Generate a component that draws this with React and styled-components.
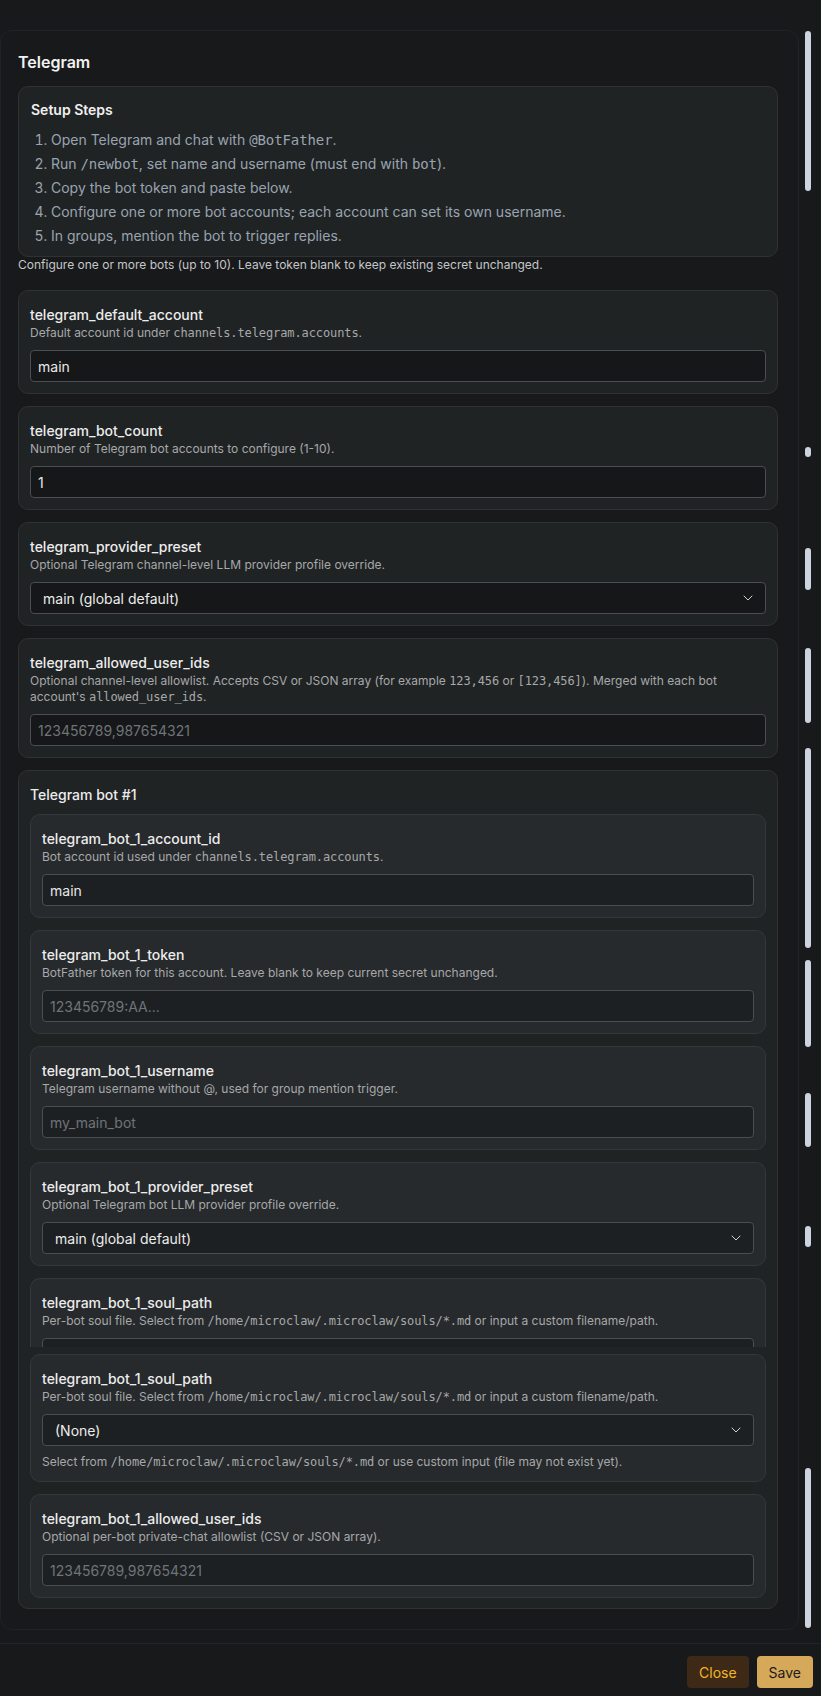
import React from 'react';
import styled, { createGlobalStyle } from 'styled-components';
import { ChevronDown } from 'lucide-react';

const Global = createGlobalStyle`
  html, body { margin: 0; padding: 0; background: #18191b; }
  body { font-family: Inter, "Noto Sans", sans-serif; color: #e6e6e6; -webkit-font-smoothing: antialiased; }
  * { box-sizing: border-box; }
`;

const Page = styled.div`
  width: 821px;
  height: 1696px;
  display: flex;
  flex-direction: column;
  background: #18191b;
  overflow: hidden;
`;

const Body = styled.div`
  display: flex;
  flex: 1;
  min-height: 0;
`;

const Panel = styled.section`
  width: 799px;
  margin-top: 30px;
  align-self: flex-start;
  border: 1px solid #1e2329;
  border-radius: 12px;
  padding: 19px 20px 20px 17px;
  background: #18191b;
`;

const Heading = styled.h2`
  margin: 0 0 12px;
  font-size: 16px;
  line-height: 24px;
  font-weight: 600;
  color: #f2f2f2;
`;

const StepsCard = styled.div`
  background: #202324;
  border: 1px solid #2e3235;
  border-radius: 10px;
  padding: 13px 12px 8px;
`;

const StepsTitle = styled.div`
  font-size: 14px;
  line-height: 20px;
  font-weight: 600;
  color: #f0f0f0;
  margin-bottom: 8px;
`;

const Steps = styled.ol`
  margin: 0;
  padding-left: 20px;
  color: #9aa3b0;
  font-size: 14px;
  line-height: 24px;
`;

const Code = styled.code`
  font-family: "DejaVu Sans Mono", "Liberation Mono", monospace;
  font-size: 1em;
  line-height: 1;
  letter-spacing: -0.1px;
`;

const Caption = styled.p`
  margin: 0 0 17px;
  font-size: 12px;
  line-height: 16px;
  color: #c4c6c8;
`;

const Stack = styled.div`
  display: flex;
  flex-direction: column;
  gap: 12px;
`;

const Card = styled.div`
  background: ${p => (p.$inner ? '#272a2c' : '#202324')};
  border: 1px solid ${p => (p.$inner ? '#34383b' : '#2e3235')};
  border-radius: 10px;
  padding: 14px 11px 11px;
  ${p => p.$clipped && `
    height: 69px;
    overflow: hidden;
    border-bottom: none;
    border-radius: 10px 10px 0 0;
    margin-bottom: -5px;
  `}
`;

const Group = styled.div`
  background: #202324;
  border: 1px solid #2e3235;
  border-radius: 10px;
  padding: 14px 11px 10px;
`;

const GroupTitle = styled.div`
  font-size: 14px;
  line-height: 20px;
  font-weight: 500;
  color: #ececec;
  margin-bottom: 9px;
`;

const Label = styled.div`
  font-size: 14px;
  line-height: 20px;
  font-weight: 500;
  color: #ececec;
`;

const Desc = styled.div`
  font-size: 12px;
  line-height: 16px;
  color: #a6a8aa;
  margin-bottom: 9px;
`;

const Hint = styled.div`
  font-size: 12px;
  line-height: 16px;
  color: #a6a8aa;
  margin-top: 8px;
`;

const Input = styled.input`
  display: block;
  width: 100%;
  height: 32px;
  padding: 0 7px;
  border: 1px solid #4a4e53;
  border-radius: 4px;
  background: ${p => (p.$inner ? '#1d2022' : '#151718')};
  color: #e8e8e8;
  font-family: Inter, "Noto Sans", sans-serif;
  font-size: 14px;
  outline: none;
  &::placeholder { color: #6f7479; }
`;

const SelectBox = styled.div`
  display: flex;
  align-items: center;
  justify-content: space-between;
  height: 32px;
  padding: 0 9px 0 12px;
  border: 1px solid #4a4e53;
  border-radius: 4px;
  background: ${p => (p.$inner ? '#1d2022' : '#151718')};
  color: #ececec;
  font-size: 14px;
  svg { color: #d0d0d0; }
`;

const Rail = styled.div`
  position: relative;
  flex: 1;
`;

const Thumb = styled.div`
  position: absolute;
  left: 6px;
  width: 6px;
  border-radius: 3px;
  background: #cdd4df;
`;

const Footer = styled.footer`
  display: flex;
  justify-content: flex-end;
  gap: 8px;
  padding: 12px 8px 8px;
  border-top: 1px solid #1f242b;
`;

const Button = styled.button`
  height: 32px;
  padding: 0 12px;
  border: none;
  border-radius: 4px;
  font-family: Inter, "Noto Sans", sans-serif;
  font-size: 14px;
  background: ${p => (p.$primary ? '#d6a95a' : '#3d2916')};
  color: ${p => (p.$primary ? '#1b1b1b' : '#f2b625')};
`;

const thumbs = [
  [31, 160], [447, 10], [548, 42], [648, 75], [748, 200],
  [960, 87], [1093, 54], [1226, 21], [1468, 160],
];

function Field({ label, desc, value, placeholder, select, hint, inner, clipped }) {
  return (
    <Card $inner={inner} $clipped={clipped}>
      <Label>{label}</Label>
      <Desc>{desc}</Desc>
      {select ? (
        <SelectBox $inner={inner}>
          <span>{value}</span>
          <ChevronDown size={16} strokeWidth={1.5} />
        </SelectBox>
      ) : (
        <Input $inner={inner} readOnly value={value || ''} placeholder={placeholder} />
      )}
      {hint && <Hint>{hint}</Hint>}
    </Card>
  );
}

const soulDesc = (
  <>Per-bot soul file. Select from <Code>/home/microclaw/.microclaw/souls/*.md</Code> or input a custom filename/path.</>
);

export default function App() {
  return (
    <>
      <Global />
      <Page>
        <Body>
          <Panel>
            <Heading>Telegram</Heading>
            <StepsCard>
              <StepsTitle>Setup Steps</StepsTitle>
              <Steps>
                <li>Open Telegram and chat with <Code>@BotFather</Code>.</li>
                <li>Run <Code>/newbot</Code>, set name and username (must end with <Code>bot</Code>).</li>
                <li>Copy the bot token and paste below.</li>
                <li>Configure one or more bot accounts; each account can set its own username.</li>
                <li>In groups, mention the bot to trigger replies.</li>
              </Steps>
            </StepsCard>
            <Caption>Configure one or more bots (up to 10). Leave token blank to keep existing secret unchanged.</Caption>
            <Stack>
              <Field
                label="telegram_default_account"
                desc={<>Default account id under <Code>channels.telegram.accounts</Code>.</>}
                value="main"
              />
              <Field
                label="telegram_bot_count"
                desc="Number of Telegram bot accounts to configure (1-10)."
                value="1"
              />
              <Field
                label="telegram_provider_preset"
                desc="Optional Telegram channel-level LLM provider profile override."
                value="main (global default)"
                select
              />
              <Field
                label="telegram_allowed_user_ids"
                desc={<>Optional channel-level allowlist. Accepts CSV or JSON array (for example <Code>123,456</Code> or <Code>[123,456]</Code>). Merged with each bot account's <Code>allowed_user_ids</Code>.</>}
                placeholder="123456789,987654321"
              />
              <Group>
                <GroupTitle>Telegram bot #1</GroupTitle>
                <Stack>
                  <Field
                    inner
                    label="telegram_bot_1_account_id"
                    desc={<>Bot account id used under <Code>channels.telegram.accounts</Code>.</>}
                    value="main"
                  />
                  <Field
                    inner
                    label="telegram_bot_1_token"
                    desc="BotFather token for this account. Leave blank to keep current secret unchanged."
                    placeholder="123456789:AA..."
                  />
                  <Field
                    inner
                    label="telegram_bot_1_username"
                    desc="Telegram username without @, used for group mention trigger."
                    placeholder="my_main_bot"
                  />
                  <Field
                    inner
                    label="telegram_bot_1_provider_preset"
                    desc="Optional Telegram bot LLM provider profile override."
                    value="main (global default)"
                    select
                  />
                  <Field
                    inner
                    clipped
                    label="telegram_bot_1_soul_path"
                    desc={soulDesc}
                    value="(None)"
                    select
                  />
                  <Field
                    inner
                    label="telegram_bot_1_soul_path"
                    desc={soulDesc}
                    value="(None)"
                    select
                    hint={<>Select from <Code>/home/microclaw/.microclaw/souls/*.md</Code> or use custom input (file may not exist yet).</>}
                  />
                  <Field
                    inner
                    label="telegram_bot_1_allowed_user_ids"
                    desc="Optional per-bot private-chat allowlist (CSV or JSON array)."
                    placeholder="123456789,987654321"
                  />
                </Stack>
              </Group>
            </Stack>
          </Panel>
          <Rail>
            {thumbs.map(([top, h]) => (
              <Thumb key={top} style={{ top, height: h }} />
            ))}
          </Rail>
        </Body>
        <Footer>
          <Button>Close</Button>
          <Button $primary>Save</Button>
        </Footer>
      </Page>
    </>
  );
}
